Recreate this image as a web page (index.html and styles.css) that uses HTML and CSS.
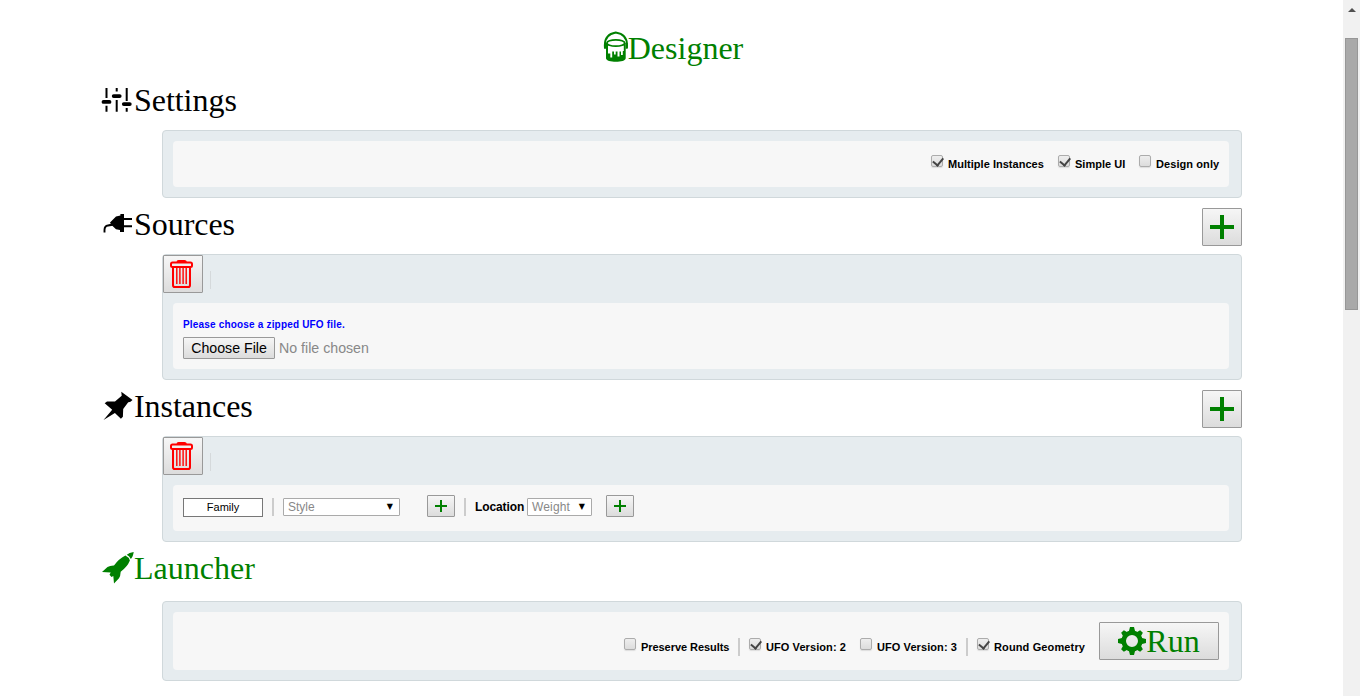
FILE: index.html
```html
<!DOCTYPE html>
<html lang="en">
<head>
<meta charset="utf-8">
<title>Designer</title>
<link rel="stylesheet" href="styles.css">
</head>
<body>
<svg class="defs" width="0" height="0">
  <symbol id="trash" viewBox="0 0 24 30">
    <path d="M6.500 3.200Q6.500 1 8.500 1h6q2 0 2.500 2.200z" fill="red"/>
    <rect x="1" y="3.500" width="21" height="4.500" rx="1.500" fill="none" stroke="red" stroke-width="2"/>
    <path d="M3 8v18.200q0 1.800 1.800 1.800h13.400q1.800 0 1.800-1.800V8" fill="none" stroke="red" stroke-width="2"/>
    <path d="M6.800 8v17M9.900 8v17M13.100 8v17M16.200 8v17" stroke="red" stroke-width="1.400"/>
  </symbol>
  <symbol id="plus" viewBox="0 0 24 24"><path d="M0 12h24M12 0v24" stroke="green" stroke-width="4"/></symbol>
  <symbol id="plus-small" viewBox="0 0 12 12"><path d="M0 6h12M6 0v12" stroke="green" stroke-width="2"/></symbol>
</svg>
<div class="window">
<main class="page">
  <h1 class="title"><svg class="bucket" viewBox="0 0 28 32" width="28" height="32"><path d="M4.900 17q-1.400-13.500 10.800-15.500Q28.500 3.500 26.900 17" fill="none" stroke="green" stroke-width="1.800"/><path d="M5 12v5.800M26.700 12v5.800" stroke="green" stroke-width="2"/><path d="M6 12v15.200c0 4.800 19.700 4.800 19.700 0V12z" fill="green"/><path d="M8 14.500h15.800v5.500h-1v4h-1.800v-3.500h-1.500v5h-2v-5h-1.800v3h-1.700v-3h-1.800v6h-1.900v-4H8z" fill="white"/><ellipse cx="15.800" cy="12" rx="8.900" ry="3.200" fill="white" stroke="green" stroke-width="1.800"/></svg><span>Designer</span></h1>

  <section>
    <header class="head"><h2><svg class="icon" viewBox="0 0 32 32"><path d="M4.500 5v10M4.500 22.700v6M14.700 5v3.500M14.700 17v11.700M24.700 5v13M24.700 25v3.700" stroke="black" stroke-width="2"/><path d="M1.500 18.900h6M11.700 13.100h6M21.800 21.100h6" stroke="black" stroke-width="3.800" stroke-linecap="round"/></svg>Settings</h2></header>
    <div class="panel"><div class="card options">
      <label class="option"><i class="box on"></i>Multiple Instances</label>
      <label class="option simple"><i class="box on"></i>Simple UI</label>
      <label class="option design"><i class="box"></i>Design only</label>
    </div></div>
  </section>

  <section>
    <header class="head"><h2><svg class="icon" viewBox="0 0 32 32"><path d="M2.500 25.500v-2.500q0-4 3.500-4.500t6-1.500" fill="none" stroke="black" stroke-width="1.900"/><path d="M8 15.500l6-6.100 4.400-1V7H22v18h-4v-2l-4-.7-4.500-4.300z"/><path d="M21 12h9M21 19.300h9" stroke="black" stroke-width="2"/></svg>Sources</h2><button class="btn square"><svg width="24" height="24"><use href="#plus"/></svg></button></header>
    <div class="panel tooled">
      <div class="tools"><button class="btn square trash"><svg width="24" height="30"><use href="#trash"/></svg></button><i class="tool-sep"></i></div>
      <div class="card upload">
        <p class="hint">Please choose a zipped UFO file.</p>
        <div class="file"><button class="btn choose">Choose File</button><span>No file chosen</span></div>
      </div>
    </div>
  </section>

  <section>
    <header class="head"><h2><svg class="icon" viewBox="0 0 32 32"><path d="M1.500 31l8.700-10.300L2.700 14.300 5 12.500h8l6.700-5.800-.4-4 11.200 8.300q-2.300 2.600-4.300 2.300l-5 6.700-.3 7.700-2 2-6-5.700z"/></svg>Instances</h2><button class="btn square"><svg width="24" height="24"><use href="#plus"/></svg></button></header>
    <div class="panel tooled">
      <div class="tools"><button class="btn square trash"><svg width="24" height="30"><use href="#trash"/></svg></button><i class="tool-sep"></i></div>
      <div class="card fields">
        <div class="family">Family</div><i class="sep"></i>
        <div class="select style">Style<b class="arrow">▼</b></div>
        <button class="btn small"><svg width="12" height="12"><use href="#plus-small"/></svg></button><i class="sep"></i>
        <strong class="location">Location</strong>
        <div class="select weight">Weight<b class="arrow">▼</b></div>
        <button class="btn small last"><svg width="12" height="12"><use href="#plus-small"/></svg></button>
      </div>
    </div>
  </section>

  <section>
    <header class="head launch"><h2><svg class="icon" viewBox="0 0 32 32"><path d="M31.700 1Q27 1.500 24.800 3.700q2.800 1.500 4 4.300Q31 6 31.700 1zM23.400 4.500q3.300 1.500 4.500 5-2.500 6.300-9.200 11.200-.2 4.300-1.700 6.500L12 32.500l-.7-7.500-1.800 1-2-2.200 1.200-2.300L0 21l5.500-5q2.500-1.600 6.500-1.500Q16.500 8 23.400 4.500z" fill="green"/></svg>Launcher</h2></header>
    <div class="panel"><div class="card options run-row">
      <label class="option preserve"><i class="box"></i>Preserve Results</label><i class="sep"></i>
      <label class="option ufo"><i class="box on"></i>UFO Version: 2</label>
      <label class="option ufo"><i class="box"></i>UFO Version: 3</label><i class="sep"></i>
      <label class="option round"><i class="box on"></i>Round Geometry</label>
      <button class="btn run"><svg width="28" height="28" viewBox="-14 -14 28 28"><g fill="green"><circle r="8.300" fill="none" stroke="green" stroke-width="4.600"/><path id="teeth" d="M-3.300-9L-2-14H2L3.300-9zM-3.300 9L-2 14H2L3.300 9zM-9-3.300L-14-2V2L-9 3.300zM9-3.300L14-2V2L9 3.300z"/><use href="#teeth" transform="rotate(45) scale(.96)"/></g></svg><span>Run</span></button>
    </div></div>
  </section>
</main>
<aside class="scrollbar"><i class="up"></i><i class="thumb"></i></aside>
</div>
</body>
</html>
```

FILE: styles.css
```css
* { box-sizing: border-box; }
body { margin: 0; background: #fff; font-family: "Liberation Sans", Arial, sans-serif; color: #000; overflow: hidden; }
.defs { display: block; }
.window { display: flex; height: 696px; }
.page { flex: 1; }
h1, h2 { margin: 0; font: 400 32px/38px "Liberation Serif", "Times New Roman", serif; display: flex; }
.title { height: 74px; padding-top: 29px; justify-content: center; color: green; }
.bucket { margin-top: 2px; }
.head { display: flex; justify-content: space-between; align-items: flex-start; height: 56px; margin: 0 101px 0 102px; }
.head h2 { padding-top: 7px; letter-spacing: -0.04px; }
.head.launch { height: 59px; color: green; }
.head.launch h2 { letter-spacing: 0; }
.head .btn { margin-top: 10px; }
.icon { width: 32px; height: 32px; margin-top: 2px; overflow: visible; }
.panel { width: 1080px; margin-left: 162px; padding: 10px 12px 10px 10px; border: 1px solid #d0d8db; border-radius: 4px; background: #e6ecef; }
.panel.tooled { padding-top: 0; }
.tools { display: flex; height: 48px; margin-left: -10px; }
.tool-sep { width: 1px; height: 18px; margin: 16px 0 0 7px; background: #d5d9db; }
.card { border-radius: 4px; background: #f7f7f7; padding: 10px; }
.options { display: flex; justify-content: flex-end; height: 46px; padding-top: 14px; }
.option { display: flex; width: 113px; font: bold 11px/18px "Liberation Sans", Arial, sans-serif; letter-spacing: 0.03px; margin-left: 14px; white-space: nowrap; }
.simple { width: 67px; }
.design { width: 80px; letter-spacing: 0.08px; }
.preserve { width: 105px; letter-spacing: -0.06px; }
.ufo { width: 97px; letter-spacing: 0.08px; }
.round { width: 108px; letter-spacing: 0.13px; }
.box { position: relative; flex: none; width: 12px; height: 12px; margin-right: 5px; border: 1px solid #acacac; border-radius: 2px; background: linear-gradient(#eee, #dcdcdc); box-shadow: 0 1px 1px #ddd; }
.box.on::after { content: ""; position: absolute; left: 3px; top: 0; width: 4.5px; height: 8px; border: solid #444; border-width: 0 2px 2px 0; transform: translate(-0.3px, -0.5px) rotate(40deg); }
.btn { display: flex; align-items: center; justify-content: center; padding: 0; border: 1px solid #999; border-radius: 1px; background: linear-gradient(#f6f6f6, #dcdcdc); color: #000; }
.square { width: 40px; height: 38px; }
.head .square svg { margin-left: -1px; }
.trash { padding: 0 2px 0 0; }
.upload { height: 66px; padding-top: 15px; }
.hint { margin: 0 0 5px; font: bold 10px/14px "Liberation Sans", Arial, sans-serif; letter-spacing: 0.18px; color: #00f; }
.file { display: flex; align-items: center; gap: 4px; font-size: 14.2px; color: #888; }
.choose { width: 92px; height: 22px; font: 14.2px "Liberation Sans", Arial, sans-serif; }
.fields { display: flex; align-items: flex-start; height: 46px; padding-top: 13px; }
.sep { width: 2px; height: 18px; background: #ccc; }
.family { width: 80px; height: 19px; border: 1px solid #777; background: #fff; text-align: center; font-size: 11px; line-height: 17px; }
.fields .sep { margin: 0 9px; }
.select { display: flex; justify-content: space-between; height: 18px; padding: 0 6px 0 4px; border: 1px solid #aaa; border-radius: 1px; background: #fff; color: #888; font-size: 12px; line-height: 16px; }
.style { width: 117px; }
.weight { width: 65px; letter-spacing: 0.15px; }
.arrow { color: #000; font: 8px/15px "DejaVu Sans", sans-serif; }
.small { width: 28px; height: 22px; margin: -3px 0 0 27px; }
.small svg { margin-left: -1px; }
.small.last { margin-left: 14px; }
.location { width: 52px; font-size: 12px; line-height: 18px; letter-spacing: -0.1px; }
.run-row { height: 58px; padding-top: 26px; }
.run-row .sep { margin-left: 9px; }
.run-row .sep + .option { margin-left: 9px; }
.run { width: 120px; height: 38px; margin: -16px 0 0 14px; color: green; font: 32px/36px "Liberation Serif", serif; }
.scrollbar { display: flex; flex-direction: column; align-items: center; width: 17px; background: #f1f1f1; }
.up { width: 0; height: 0; margin-top: 8px; border: solid transparent; border-width: 0 4px 4px; border-bottom-color: #505050; }
.thumb { width: 13px; height: 272px; margin-top: 26px; border: 1px solid #979797; background: #a9a9a9; }
```
